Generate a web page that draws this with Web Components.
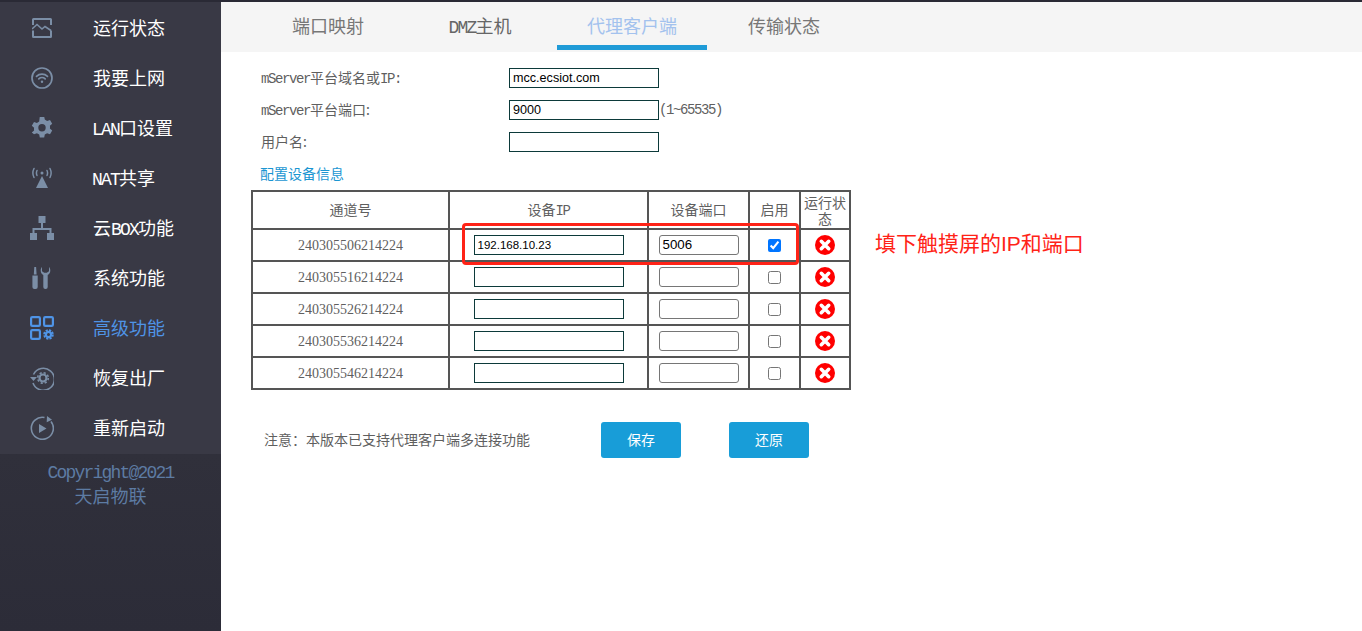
<!DOCTYPE html>
<html lang="zh"><head><meta charset="utf-8"><title>代理客户端</title>
<style>
html,body{margin:0;height:100%;overflow:hidden;background:#fff}
body{font:14px "Noto Sans CJK SC",sans-serif;color:#5f5f5f}
svg{display:block}
</style></head><body>
<app-shell>
  <side-nav slot="nav">
    <nav-item><svg slot="icon" width="20" height="20" viewBox="0 0 20 20" fill="none" stroke="#7b8ea6" stroke-width="2"><path d="M1 7V1.500a.5.5 0 0 1 .5-.5h17a.5.5 0 0 1 .5.5V7M1 12.500v6a.5.5 0 0 0 .5.5h17a.5.5 0 0 0 .5-.5v-6"/><path stroke-width="1.600" d="M0 11l5-4.500 5 4.500 3-2.500 6 4"/></svg>运行状态</nav-item>
    <nav-item><svg slot="icon" width="22" height="22" viewBox="0 0 22 22" fill="none" stroke="#7b8ea6" stroke-width="1.700"><circle cx="11" cy="11" r="10"/><path stroke-linecap="round" d="M5.500 9.300a8 8 0 0 1 11 0M7.800 11.800a4.700 4.700 0 0 1 6.400 0"/><circle cx="11" cy="14.700" r="1.200" fill="#7b8ea6" stroke="none"/></svg>我要上网</nav-item>
    <nav-item tight><svg slot="icon" width="22" height="22" viewBox="0 0 22 22"><path fill="#7b8ea6" fill-rule="evenodd" d="M8.800 0h4.400l.6 3 2.300 1.300 2.900-1 2.200 3.800-2.300 2a8 8 0 0 1 0 2.800l2.300 2-2.200 3.800-2.900-1-2.300 1.300-.6 3H8.800l-.6-3-2.300-1.300-2.900 1L.8 15.900l2.300-2a8 8 0 0 1 0-2.800l-2.300-2L3 5.300l2.900 1L8.200 5zM11 7.500a3.700 3.700 0 1 0 0 7.400 3.700 3.700 0 0 0 0-7.400z" transform="translate(0 -.4)"/></svg><la-t-l>LAN</la-t-l>口设置</nav-item>
    <nav-item tight><svg slot="icon" width="22" height="22" viewBox="0 0 22 22" fill="none" stroke="#7b8ea6" stroke-width="1.500" stroke-linecap="round"><path d="M3 1.500a10 10 0 0 0 0 9M19 1.500a10 10 0 0 1 0 9M6 3.500a6 6 0 0 0 0 5M16 3.500a6 6 0 0 1 0 5"/><circle cx="11" cy="6" r="1.500" fill="#7b8ea6" stroke="none"/><path fill="#7b8ea6" stroke="none" d="M11 9l6 12H5z"/></svg><la-t-l>NAT</la-t-l>共享</nav-item>
    <nav-item><svg slot="icon" width="24" height="24" viewBox="0 0 24 24" fill="#7b8ea6"><path d="M8.500 0h7v7h-7zM0 17h7v7H0zM17 17h7v7h-7z"/><path fill="none" stroke="#7b8ea6" stroke-width="2" d="M12 7v6M3.500 17v-4h17v4"/></svg>云<la-t-l>BOX</la-t-l>功能</nav-item>
    <nav-item><svg slot="icon" width="20" height="22" viewBox="0 0 20 22" fill="#7b8ea6"><path d="M2.300 0h1.800l.5 7.500h-2.800zM.4 8.500h5.300V20a2 2 0 0 1-2 2H2.400a2 2 0 0 1-2-2z"/><path d="M10 0c-.9 1-1.300 2.200-1.300 3.500 0 2 1 3.600 2.600 4.400V20a2 2 0 0 0 2 2h.4a2 2 0 0 0 2-2V7.900c1.600-.8 2.600-2.400 2.600-4.400 0-1.300-.4-2.500-1.300-3.500v4.300l-2.200 1.500h-2.600L10 4.300z"/></svg>系统功能</nav-item>
    <nav-item active><svg slot="icon" width="24" height="24" viewBox="0 0 24 24" fill="none" stroke="#4f94e6" stroke-width="2.200"><rect x="1.100" y="1.100" width="8.800" height="8.800" rx="1.200"/><rect x="14.100" y="1.100" width="8.800" height="8.800" rx="1.200"/><rect x="1.100" y="14.100" width="8.800" height="8.800" rx="1.200"/><circle cx="18.500" cy="18.500" r="2.600"/><circle cx="18.500" cy="18.500" r="4.400" stroke-dasharray="2.200 1.250" stroke-width="1.800"/></svg>高级功能</nav-item>
    <nav-item><svg slot="icon" width="24" height="24" viewBox="0 0 24 24" fill="none" stroke="#7b8ea6" stroke-width="1.600"><path d="M3.500 8.500A11 11 0 1 1 3 17"/><path fill="#7b8ea6" stroke="none" d="M0 11h7l-3.500 4z"/><circle cx="13" cy="12" r="3.500" stroke-width="2.200"/><circle cx="13" cy="12" r="5.300" stroke-width="1.600" stroke-dasharray="2.200 1.960"/></svg>恢复出厂</nav-item>
    <nav-item><svg slot="icon" width="24" height="24" viewBox="0 0 24 24" fill="none" stroke="#7b8ea6" stroke-width="1.600"><path d="M14.500 1.500A11 11 0 1 0 21 5.500"/><path fill="#7b8ea6" stroke="none" d="M17 0l5 3.800-5.300 2.400zM9 8l7.500 4.500L9 17z"/></svg>重新启动</nav-item>
    <div slot="foot"><la-t-l>Copyright@2021</la-t-l><br>天启物联</div>
  </side-nav>
  <tab-bar slot="tabs">
    <tab-item>端口映射</tab-item>
    <tab-item dark><la-t-l>DMZ</la-t-l>主机</tab-item>
    <tab-item active>代理客户端</tab-item>
    <tab-item>传输状态</tab-item>
  </tab-bar>
  <client-form></client-form>
</app-shell>
<script>
const el=(name,html,Base=HTMLElement,extra)=>{
  const t=document.createElement('template');t.innerHTML=html;
  customElements.define(name,class extends Base{constructor(){super();this.attachShadow({mode:'open'}).appendChild(t.content.cloneNode(true));extra&&extra.call(this)}});
};
el('la-t-l',`<style>:host{display:inline;font-family:"Liberation Mono",monospace;letter-spacing:-.1em}</style><slot></slot>`);
el('app-shell',`<style>
:host{display:flex;height:631px;width:1362px;box-sizing:border-box;border-top:2px solid #2a2a35}
.m{flex:1;display:flex;flex-direction:column;min-width:0}
</style><slot name="nav"></slot><div class="m"><slot name="tabs"></slot><slot></slot></div>`);
el('side-nav',`<style>
:host{display:flex;flex-direction:column;width:221px;flex:none;background:#393945}
.items{padding-top:1px;height:452px;box-sizing:border-box}
.f{flex:1;background:linear-gradient(#30303b,#2c2c38);color:#5d7ba3;font-size:18px;line-height:22px;text-align:center;padding-top:5px}
</style><div class="items"><slot></slot></div><div class="f"><slot name="foot"></slot></div>`);
el('nav-item',`<style>
:host{display:flex;align-items:center;height:50px;font-size:18px;color:#fff}
:host([active]){color:#4f94e6}
.i{width:93px;padding-right:11px;padding-left:1px;box-sizing:border-box;flex:none;display:flex;justify-content:center}
:host([tight]) .i{width:92px;padding-right:10px}
.t{padding-bottom:2px}
</style><span class="i"><slot name="icon"></slot></span><span class="t"><slot></slot></span>`);
el('tab-bar',`<style>
:host{display:flex;gap:2px;height:50px;background:#f5f5f5;padding-left:32px;flex:none}
</style><slot></slot>`);
el('tab-item',`<style>
:host{display:block;box-sizing:border-box;width:150px;height:48px;text-align:center;font-size:18px;line-height:46px;color:#777}
:host([dark]){color:#666}
:host([active]){color:#a3c2ee;border-bottom:5px solid #1f9bd7}
</style><slot></slot>`);
el('text-box',`<style>
:host{display:block;box-sizing:border-box;width:var(--w,150px);height:20px;border:1.5px solid #0c3a3a;background:#fff;font:var(--fs,12.600px)/18px "Liberation Sans",sans-serif;color:#000;padding-left:3px;white-space:nowrap;text-align:left}
:host([soft]){border:1px solid #767676;border-radius:3px;font-size:13.300px;padding-left:3px}
</style><slot></slot>`);
el('status-x',`<style>:host{display:block;width:20px;height:20px;margin:auto}</style>
<svg width="20" height="20" viewBox="0 0 20 20"><circle cx="10" cy="10" r="10" fill="#f00"/><path d="M6.300 6.300l7.400 7.400M13.700 6.300l-7.400 7.400" stroke="#fff" stroke-width="3.600" stroke-linecap="round"/></svg>`);
el('blue-btn',`<style>
:host{display:block;width:80px;height:36px;background:#189dd8;border-radius:3px;color:#fff;font-size:14px;line-height:34px;text-align:center}
</style><slot></slot>`);
const rows=[['240305506214224','192.168.10.23','5006',true],['240305516214224','','',false],['240305526214224','','',false],['240305536214224','','',false],['240305546214224','','',false]];
el('client-form',`<style>
:host{display:block;padding-left:30px;position:relative;flex:1}
.f{display:grid;grid-template-columns:248px auto;grid-auto-rows:32px;align-items:center;padding:10px 0 0 10px}
.f>span{padding-bottom:2px}
.r{display:flex;align-items:center}
.link{height:32px;line-height:30px;padding-left:9px;color:#1a96d2}
table{border-collapse:collapse;table-layout:fixed;width:598px;color:#5f5f5f;font-size:14px}
td,th{border:2px solid #555;padding:0;text-align:center;font-weight:400;height:30px}
th{height:34px;padding-bottom:2px}
th.s{line-height:16px;padding-bottom:0;height:36px}
td.num{font-family:"Liberation Serif",serif;height:28px;padding-top:2px}
.c{display:flex;justify-content:center}
input{accent-color:#0075ff;width:13px;height:13px;display:block;margin:auto}
.bot{display:flex;align-items:center;margin-top:32px;padding-left:13px}
.note{width:337px;padding-bottom:2px}
.gap{width:48px}
.mark{position:absolute;left:241px;top:171px;width:337px;height:42px;box-sizing:border-box;border:3px solid #ff2317;border-radius:4px;pointer-events:none}
.say{position:absolute;left:654px;top:174px;font:21px/32px "Noto Sans CJK SC",sans-serif;color:#ff2317;white-space:nowrap}
.say span{font-family:"Liberation Sans",sans-serif}
</style>
<div class="f">
 <span><la-t-l>mServer</la-t-l>平台域名或<la-t-l>IP:</la-t-l></span><text-box>mcc.ecsiot.com</text-box>
 <span><la-t-l>mServer</la-t-l>平台端口:</span><div class="r"><text-box>9000</text-box><la-t-l>(1~65535)</la-t-l></div>
 <span>用户名:</span><text-box></text-box>
</div>
<div class="link">配置设备信息</div>
<table><colgroup><col style="width:197px"><col style="width:199px"><col style="width:101px"><col style="width:51px"><col style="width:50px"></colgroup>
<thead><tr><th>通道号</th><th>设备<la-t-l>IP</la-t-l></th><th>设备端口</th><th>启用</th><th class="s">运行状态</th></tr></thead>
<tbody id="b"></tbody></table>
<div class="bot"><span class="note">注意：本版本已支持代理客户端多连接功能</span><blue-btn>保存</blue-btn><span class="gap"></span><blue-btn>还原</blue-btn></div>
<div class="mark"></div><div class="say">填下触摸屏的<span>IP</span>和端口</div>`,HTMLElement,function(){
  const b=this.shadowRoot.getElementById('b');
  rows.forEach(([n,ip,port,on])=>{
    const tr=document.createElement('tr');
    tr.innerHTML=`<td class="num">${n}</td><td><div class="c"><text-box style="--w:150px;--fs:11.500px">${ip}</text-box></div></td><td><div class="c"><text-box soft style="--w:80px">${port}</text-box></div></td><td><input type="checkbox" ${on?'checked':''} aria-label="启用"></td><td><status-x></status-x></td>`;
    b.appendChild(tr);
  });
});
</script>
</body></html>
